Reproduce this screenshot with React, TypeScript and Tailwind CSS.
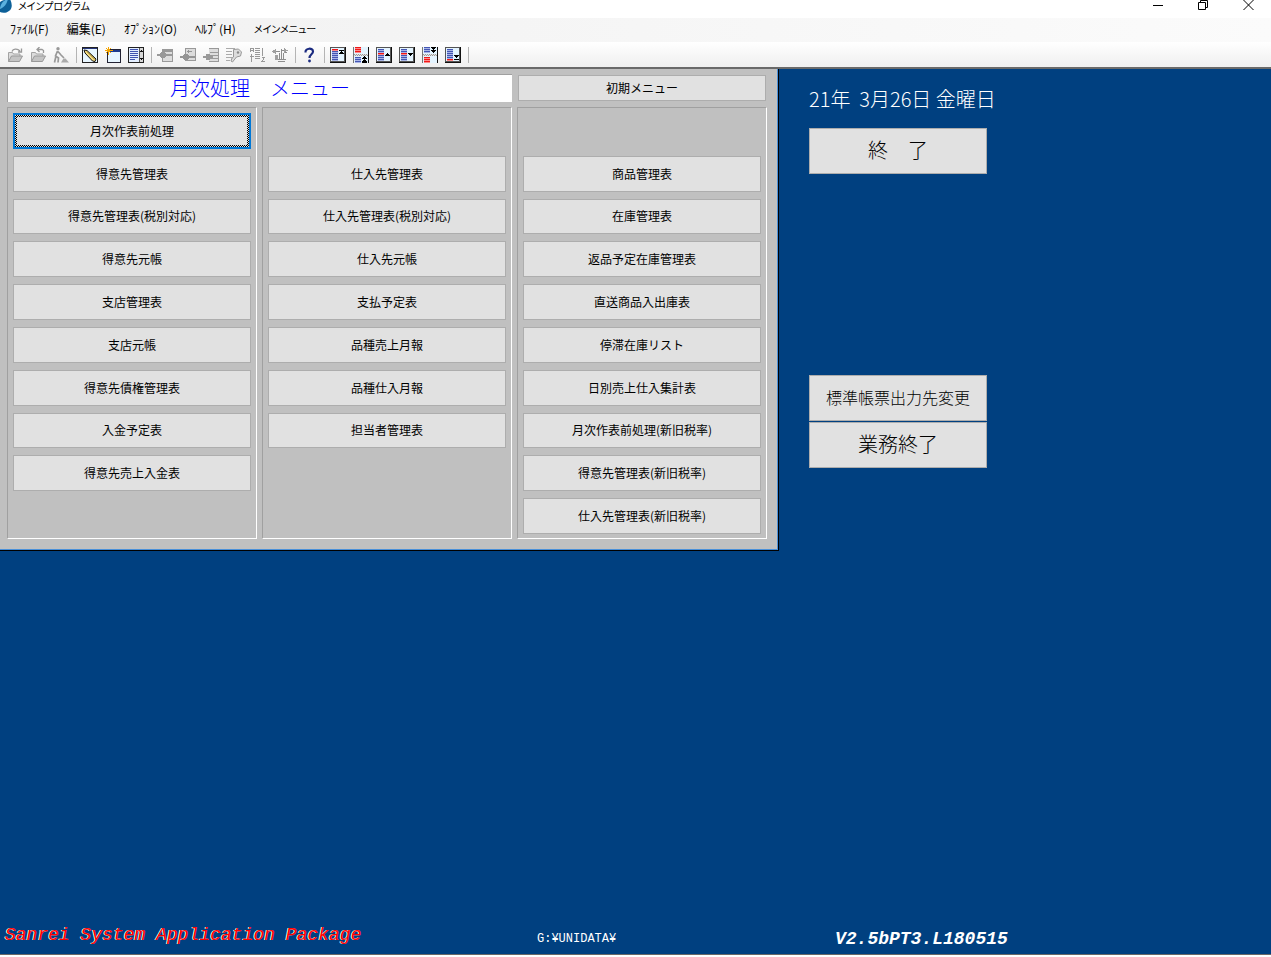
import { ReactNode } from "react";
import clsx from "clsx";

const columns: (string | null)[][] = [
  [
    "月次作表前処理",
    "得意先管理表",
    "得意先管理表(税別対応)",
    "得意先元帳",
    "支店管理表",
    "支店元帳",
    "得意先債権管理表",
    "入金予定表",
    "得意先売上入金表",
    null,
  ],
  [
    null,
    "仕入先管理表",
    "仕入先管理表(税別対応)",
    "仕入先元帳",
    "支払予定表",
    "品種売上月報",
    "品種仕入月報",
    "担当者管理表",
    null,
    null,
  ],
  [
    null,
    "商品管理表",
    "在庫管理表",
    "返品予定在庫管理表",
    "直送商品入出庫表",
    "停滞在庫リスト",
    "日別売上仕入集計表",
    "月次作表前処理(新旧税率)",
    "得意先管理表(新旧税率)",
    "仕入先管理表(新旧税率)",
  ],
];

const menus = ["ﾌｧｲﾙ(F)", "編集(E)", "ｵﾌﾟｼｮﾝ(O)", "ﾍﾙﾌﾟ(H)"];

function Icon({ children }: { children: ReactNode }) {
  return (
    <svg width="16" height="16" viewBox="0 0 16 16" fill="none" shapeRendering="crispEdges">
      {children}
    </svg>
  );
}

function ToolButton({ label, children }: { label: string; children: ReactNode }) {
  return (
    <button aria-label={label} className="flex w-[23px] h-[23px] items-center justify-center">
      <Icon>{children}</Icon>
    </button>
  );
}

function Separator() {
  return <div className="w-1.5 h-4 flex justify-end pr-px"><div className="w-px bg-[#b4b4b4]" /></div>;
}

// 灰色のフォルダー（矢印の向きだけ違う）
function Folder({ back }: { back?: boolean }) {
  return (
    <g shapeRendering="auto">
      <path d="M1.500 14.500V5.500h4l1 1.500h6.500v2" stroke="#a3a3a3" fill="#dcdcdc" />
      <path d="M1.500 14.500l3-5.500h11l-3 5.500z" stroke="#999" fill="#c4c4c4" />
      <path d={back ? "M13.500 6V3.500L12 2.500H7M9.500 0L7 2.500 9.500 5" : "M5 4.500C6 2 10 1 13 4M14.500 1.500V5H11"} stroke="#999" strokeWidth="1.3" />
    </g>
  );
}

// 一覧の行。red は赤く塗る行番号
function Rows({ x, y, count, red }: { x: number; y: number; count: number; red: number[] }) {
  return (
    <>
      {Array.from({ length: count }, (_, i) => (
        <g key={i}>
          <rect x={x} y={y + i * 2} width="6" height="2" fill={red.includes(i) ? "#ff8a8a" : "#a9b4e6"} />
          <rect x={x} y={y + i * 2} width="6" height="1" fill={red.includes(i) ? "#f01818" : "#4356b4"} />
        </g>
      ))}
    </>
  );
}

function Sheet({ red, children }: { red: number[]; children: ReactNode }) {
  return (
    <>
      <rect width="16" height="16" fill="#111" />
      <rect width="15" height="15" fill="#555" />
      <rect x="1" y="1" width="13" height="13" fill="#e4f4ff" />
      <Rows x={2} y={2} count={6} red={red} />
      {children}
    </>
  );
}

function Split({ top }: { top?: boolean }) {
  return (
    <>
      <path d="M1 0h14v16H1z" fill="#e4f4ff" />
      <path d="M.5 0v16" stroke="#777" />
      <path d="M15.500 0v16" stroke="#111" />
      <Rows x={2} y={0} count={3} red={top ? [0, 1, 2] : []} />
      <Rows x={2} y={10} count={3} red={top ? [] : [0, 1, 2]} />
      <path d="M1 7h14v2H1z" fill="#e4e4e4" />
      <path d="M1 7.500h14M2 8.500h13" stroke="#999" strokeDasharray="1 1" />
      <path
        d={top ? "M11 9h1v1h1v1h1v1H9v-1h1v-1h1zM11 12h1v1h1v1h1v1H9v-1h1v-1h1zM9 15h5v1H9z" : "M9 0h5v1h-1v1h-1v1h-1V2h-1V1H9zM9 3h5v1h-1v1h-1v1h-1V5h-1V4H9z"}
        fill="#000"
      />
    </>
  );
}

function Toolbar() {
  return (
    <div className="h-[25px] flex items-center pl-[3px] bg-linear-to-b from-white to-[#efefef]">
      <ToolButton label="開く"><Folder /></ToolButton>
      <ToolButton label="戻す"><Folder back /></ToolButton>
      <ToolButton label="実行">
        <g shapeRendering="auto">
          <circle cx="5" cy="1.800" r="1.700" fill="#999" />
          <path d="M4.500 4L2.500 9l3 2-.5 4.500M3 9l-1.500 6.500M5 4.500L8 8l3 3" stroke="#999" strokeWidth="1.700" />
          <path d="M8 15.500l2.500-4h2l3.500 4z" fill="#aaa" />
        </g>
      </ToolButton>
      <Separator />
      <ToolButton label="編集">
        <path d="M.5.5h15v15H.5z" fill="#e8f6ff" stroke="#222" />
        <path d="M1 1h14v1H1z" fill="#26367c" />
        <g shapeRendering="auto">
          <path d="M2 3l3 .5 9 8.500-1 2.500L10.500 14 3 6z" fill="#f4dc80" stroke="#111" />
          <path d="M5 4.500l8 8" stroke="#8a7020" />
        </g>
      </ToolButton>
      <ToolButton label="新規ウィンドウ">
        <path d="M2.500 2.500h13v13h-13z" fill="#e8f6ff" stroke="#223" />
        <path d="M3 3h12v2H3z" fill="#1f3c8c" />
        <path d="M3.500 0v8M0 3.500h8M1 1l5 5M6 1L1 6" stroke="#f5a400" shapeRendering="auto" />
      </ToolButton>
      <ToolButton label="一覧">
        <path d="M.5.5h15v15H.5z" fill="#e4efff" stroke="#222" />
        <path d="M2 2.500h8M2 4.500h8M2 6.500h8M2 8.500h8M2 10.500h8M2 12.500h5" stroke="#4054b0" />
        <path d="M11.500 1v14" stroke="#555" />
        <path d="M12 1h3v14h-3z" fill="#d8d8d8" />
        <path d="M13 3h1v1h-1zM12 4h3v1h-3zM12 11h3v1h-3zM13 12h1v1h-1z" fill="#111" />
      </ToolButton>
      <Separator />
      <ToolButton label="挿入">
        <path d="M5 2.500h10.500v12H5z" fill="#ddd" stroke="#999" />
        <path d="M6 3h9v2H6zM0 7h15v2H0zM4 5h4v6H4zM3 6h6v4H3z" fill="#999" />
      </ToolButton>
      <ToolButton label="追加">
        <path d="M5 1.500h10.500v12H5z" fill="#dcdcdc" stroke="#999" />
        <path d="M0 9h15v2H0zM4 7h4v6H4zM3 8h6v4H3zM7 4h5v1H7zM8 3h1v3H8z" fill="#959595" />
      </ToolButton>
      <ToolButton label="削除">
        <path d="M6 1.500h9.500v13H6M7 5.500h8M7 8.500h8M7 11.500h8" fill="#ddd" stroke="#999" />
        <path d="M0 9h10v2H0zM3 7h4v6H3z" fill="#999" />
      </ToolButton>
      <ToolButton label="キー">
        <path d="M0 1.500h9M0 4.500h6M0 7.500h6M0 10.500h6M0 13.500h4" stroke="#aaa" />
        <g shapeRendering="auto">
          <path d="M7.500 2.500l5-.5 3 3-1 4-4 1-4 5-1.500-1 1-3 1.500-1z" fill="#ddd" stroke="#999" />
          <circle cx="12" cy="5.500" r="1.200" fill="#888" />
        </g>
      </ToolButton>
      <ToolButton label="並べ替え">
        <path d="M1.500 5V1h3v4M1.500 3h3M2.500 7v8M.5 9.500h4M6 1.500h5M6 3.500h5M6 5.500h5M6 7.500h5M6 9.500h5M6 11.500h5M13.500 1v8M12.500 10.500h3L13 14.500h3" stroke="#999" />
      </ToolButton>
      <ToolButton label="切替">
        <path d="M3 4h5v1H3zM9 2h1v10H9zM10 3h5v1h-5zM13 5h2v1h-2zM7 6h1v6H7zM11 6h1v6h-1zM4 12h10v1H4zM6 14h7v1H6z" fill="#8d8d8d" />
        <path d="M0 4.500L3.500 2v5zM12 1l4 2.500L12 6zM3 8h3v5H3z" fill="#a0a0a0" />
      </ToolButton>
      <Separator />
      <ToolButton label="ヘルプ">
        <g shapeRendering="auto">
          <path d="M4.500 5.500C4 .8 12 .5 12 4.500 12 7.500 8.500 7 8.500 11" stroke="#1b2b80" strokeWidth="2.200" />
          <circle cx="8.500" cy="14" r="1.400" fill="#1b2b80" />
        </g>
      </ToolButton>
      <Separator />
      <ToolButton label="先頭"><Sheet red={[0]}><path d="M9 3h5v1H9zM11 4h1v1h1v1h1v1H9V6h1V5h1z" fill="#000" /></Sheet></ToolButton>
      <ToolButton label="前ページ"><Split top /></ToolButton>
      <ToolButton label="前行"><Sheet red={[2]}><path d="M11 6h1v1h1v1h1v1H9V8h1V7h1z" fill="#000" /></Sheet></ToolButton>
      <ToolButton label="次行"><Sheet red={[2]}><path d="M9 6h5v1h-1v1h-1v1h-1V8h-1V7H9z" fill="#000" /></Sheet></ToolButton>
      <ToolButton label="次ページ"><Split /></ToolButton>
      <ToolButton label="最終"><Sheet red={[5]}><path d="M9 8h5v1h-1v1h-1v1h-1v-1h-1V9H9zM9 12h5v1H9z" fill="#000" /></Sheet></ToolButton>
      <Separator />
    </div>
  );
}

function MenuButton({ text, focused }: { text: string; focused?: boolean }) {
  if (focused) {
    return (
      <button className="flex p-0.5 border-2 border-[#0078d7] bg-[repeating-conic-gradient(#000_0_25%,#e1e1e1_0_50%)] bg-[length:2px_2px]">
        <span className="flex-1 self-stretch flex items-center justify-center bg-[#e1e1e1]">{text}</span>
      </button>
    );
  }
  return <button className="border border-[#adadad] bg-[#e1e1e1]">{text}</button>;
}

function SideButton({ text, small }: { text: string; small?: boolean }) {
  return (
    <button
      className={clsx(
        "w-full h-[46px] pb-0.5 border border-[#adadad] bg-[#e1e1e1] font-light text-black",
        small ? "text-base" : "text-xl"
      )}
    >
      {text}
    </button>
  );
}

export default function App() {
  return (
    <div className="min-h-screen flex flex-col bg-white text-black text-xs font-['Noto_Sans_CJK_JP',sans-serif]">
      {/* タイトルバー */}
      <header className="h-[18px] flex items-start">
        <svg width="12" height="13" viewBox="0 0 12 13">
          <path d="M0 2C3 0 7-1 10-1c2 4 3 9-1 12-3 2.500-7 2-9 1z" fill="#0d6098" />
          <path d="M0 8C1 3 4 0 8-1 7 3 5 7 0 9z" fill="#5ab0de" />
        </svg>
        <h1 className="flex-1 pl-1.5 text-[10px] leading-3 [font-feature-settings:'palt']">メインプログラム</h1>
        <button aria-label="最小化" className="w-[45px] flex justify-center">
          <svg width="11" height="11" stroke="#000"><path d="M0 5.500h10" /></svg>
        </button>
        <button aria-label="元に戻す" className="w-[45px] flex justify-center">
          <svg width="11" height="11" stroke="#000" fill="none"><path d="M.5 2.500h7v7h-7zM2.500 2V.5h7v7H8" /></svg>
        </button>
        <button aria-label="閉じる" className="w-[45px] flex justify-center">
          <svg width="11" height="11" stroke="#000"><path d="M.5 0l10 10M10.500 0l-10 10" /></svg>
        </button>
      </header>

      <nav className="h-6 flex items-center gap-[18px] pl-2.5 pb-0.5 bg-linear-to-r from-[#f1f1f1] to-[#fbfbfb]">
        {menus.map((m) => (
          <button key={m} className="[font-feature-settings:'palt']">{m}</button>
        ))}
        <button className="text-[10px] [font-feature-settings:'palt']">メインメニュー</button>
      </nav>

      <Toolbar />

      <main className="flex-1 flex flex-col justify-between border-t-2 border-b border-[#696969] bg-[#004080] mb-0.5">
        <div className="flex items-start gap-[30px]">
          <section className="border-r border-b border-black">
            <div className="border-r border-b border-[#4a90d9] bg-[#c0c0c0] pl-[7px] pr-2.5 pt-[5px] pb-2.5 grid grid-cols-[repeat(3,250px)] gap-[5px]">
              <h2 className="col-span-2 h-7 pb-0.5 flex items-center justify-center border-l border-t border-[#a0a0a0] bg-white text-xl font-light text-[#0000ff]">
                月次処理　メニュー
              </h2>
              <button className="m-px border border-[#adadad] bg-[#e1e1e1]">初期メニュー</button>

              {columns.map((items, c) => (
                <div
                  key={c}
                  className="h-[432px] grid grid-rows-10 gap-[7px] px-[5px] pt-[5px] pb-1 border border-l-[#a0a0a0] border-t-[#a0a0a0] border-r-white border-b-white"
                >
                  {items.map((text, i) =>
                    text ? <MenuButton key={i} text={text} focused={c === 0 && i === 0} /> : <div key={i} />
                  )}
                </div>
              ))}
            </div>
          </section>

          <aside className="w-[178px] pt-4">
            <p className="h-7 text-xl leading-7 font-light text-white whitespace-pre">21年  3月26日 金曜日</p>
            <div className="pt-[15px]">
              <SideButton text="終　了" />
            </div>
            <div className="pt-[201px] flex flex-col gap-px">
              <SideButton text="標準帳票出力先変更" small />
              <SideButton text="業務終了" />
            </div>
          </aside>
        </div>

        <footer className="grid grid-cols-[532px_298px_1fr] items-end pl-[5px] pb-[3px] text-white font-['Liberation_Mono','Noto_Sans_CJK_JP',monospace]">
          <p className="pb-1 text-lg leading-6 italic text-[#ff0000] [text-shadow:-1px_0_#fff]">Sanrei System Application Package</p>
          <p className="leading-6">G:¥UNIDATA¥</p>
          <p className="text-lg leading-6 font-bold italic">V2.5bPT3.L180515</p>
        </footer>
      </main>
    </div>
  );
}
